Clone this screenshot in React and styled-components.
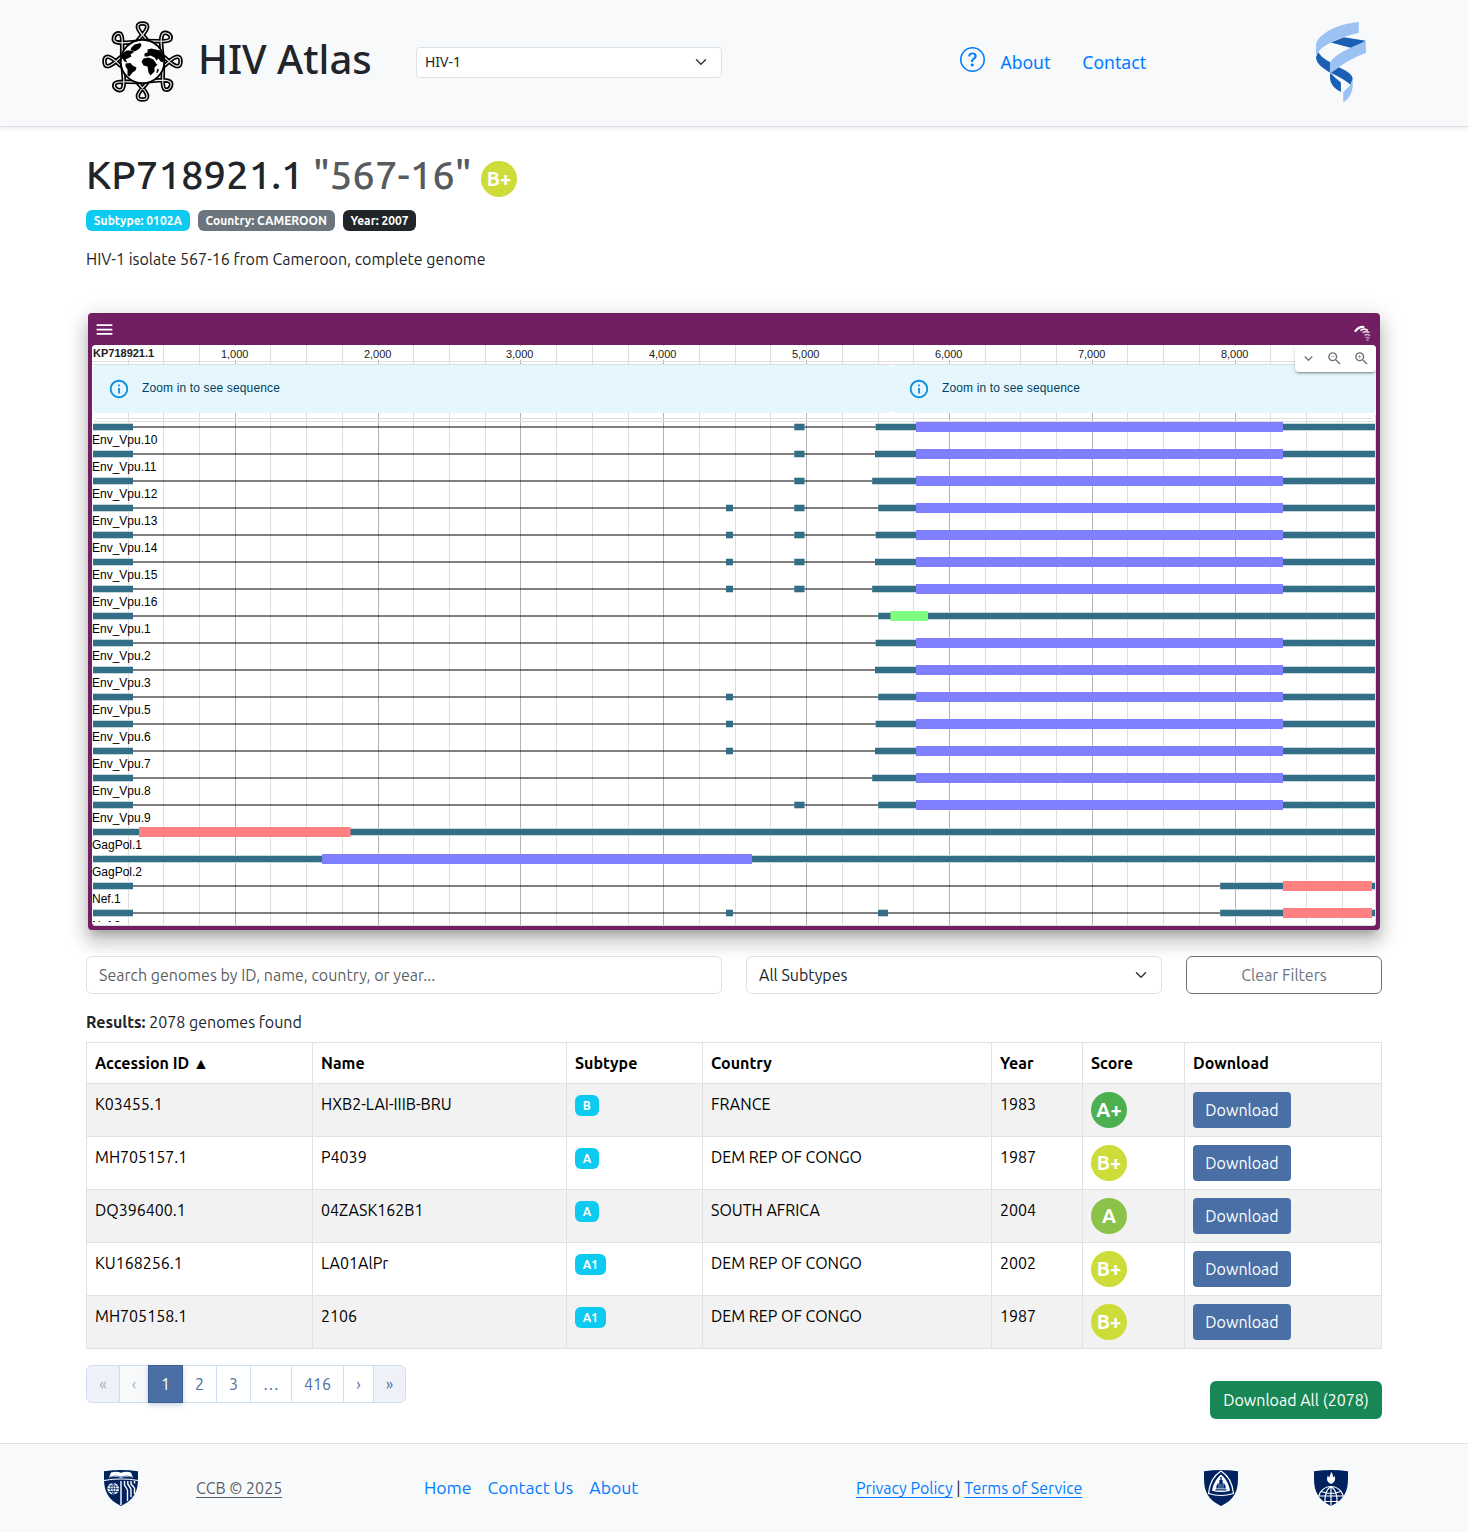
import React from 'react';
import styled, { createGlobalStyle } from 'styled-components';
import { BsQuestionCircle } from 'react-icons/bs';
import { MdMenu, MdExpandMore, MdZoomIn, MdZoomOut, MdInfoOutline } from 'react-icons/md';

const bodyFont = 'Ubuntu, "Noto Sans", sans-serif';
const headerFont = '"Noto Sans", sans-serif';
const browserFont = 'Helvetica, "Liberation Sans", Arial, sans-serif';

const GlobalStyle = createGlobalStyle`
  *, *::before, *::after { box-sizing: border-box; }
  body {
    margin: 0;
    background: #fff;
    color: #212529;
    font-family: ${bodyFont};
    font-size: 16px;
    font-weight: 400;
    line-height: 1.5;
  }
`;

const Page = styled.div`
  display: flex;
  flex-direction: column;
  width: 1468px;
  height: 1532px;
`;

/* ---------- header ---------- */

const Header = styled.header`
  display: flex;
  align-items: center;
  height: 127px;
  flex: none;
  padding: 0 102px;
  background: #f8f9fb;
  border-bottom: 1px solid #dee2e6;
  box-shadow: 0 2px 4px rgba(0, 0, 0, 0.08);
  font-family: ${headerFont};
`;

const Brand = styled.div`
  display: flex;
  align-items: center;
  width: 314px;
  padding-bottom: 3px;
`;

const BrandName = styled.span`
  margin: -5px 0 0 15px;
  font-size: 40px;
  font-weight: 500;
  line-height: 48px;
  white-space: nowrap;
`;

const SelectBox = styled.div`
  display: flex;
  align-items: center;
  justify-content: space-between;
  width: ${(p) => p.$width}px;
  height: ${(p) => (p.$small ? 31 : 38)}px;
  padding: ${(p) => (p.$small ? '0 12px 1px 8px' : '0 12px')};
  margin-bottom: ${(p) => (p.$small ? 2 : 0)}px;
  border: 1px solid #dee2e6;
  border-radius: ${(p) => (p.$small ? 4 : 6)}px;
  background: #fff;
  font-size: ${(p) => (p.$small ? 14 : 16)}px;
  line-height: ${(p) => (p.$small ? 20 : 24)}px;
  svg { display: block; }
`;

const HeaderNav = styled.nav`
  display: flex;
  align-items: center;
  margin-left: 238px;
  padding-bottom: 2px;
  color: #007bff;
  font-size: 17.6px;
`;

const HelpIcon = styled(BsQuestionCircle)`
  width: 25px;
  height: 25px;
  margin: -5px 15.4px 0 0;
`;

const NavLink = styled.a`
  margin-right: 32px;
`;

const HelixSlot = styled.div`
  display: flex;
  margin: -2px 0 0 auto;
`;

/* ---------- record summary ---------- */

const Main = styled.main`
  display: flex;
  flex-direction: column;
  width: 1296px;
  height: 1316px;
  margin: 0 auto;
  padding-top: 24px;
`;

const Title = styled.h1`
  display: flex;
  align-items: center;
  margin: 0;
  height: 48px;
  font-size: 40px;
  font-weight: 500;
  line-height: 48px;
`;

const TitleText = styled.span`
  margin-top: -1px;
`;

const Muted = styled.span`
  color: rgba(33, 37, 41, 0.75);
`;

const gradeColors = { 'A+': '#4caf50', A: '#8bc34a', 'B+': '#cddc39' };

const Grade = styled.span`
  display: flex;
  align-items: center;
  justify-content: center;
  width: 36px;
  height: 36px;
  margin: ${(p) => (p.$inTitle ? '8px 0 0 9.4px' : '0')};
  border-radius: 50%;
  background: ${(p) => gradeColors[p.$grade]};
  color: #fff;
  font-size: 20px;
  font-weight: 700;
  line-height: 1;
`;

const Badges = styled.div`
  display: flex;
  gap: 8px;
  margin-top: 11px;
`;

const badgeTones = { info: '#0dcaf0', secondary: '#6c757d', dark: '#212529' };

const Badge = styled.span`
  display: inline-block;
  height: 21px;
  padding: 5px 7.8px 4px;
  border-radius: 6px;
  background: ${(p) => badgeTones[p.$tone]};
  color: #fff;
  font-size: 12px;
  font-weight: 700;
  line-height: 12px;
`;

const Description = styled.p`
  margin: 16px 0 0;
`;

/* ---------- genome browser ---------- */

const Browser = styled.section`
  display: flex;
  flex-direction: column;
  width: 1292px;
  height: 617px;
  flex: none;
  margin: 42px 2px 0;
  padding: 0 4px 4px;
  border-radius: 4px;
  background: #721e63;
  box-shadow: 0 7px 8px -4px rgba(0, 0, 0, 0.2), 0 12px 17px 2px rgba(0, 0, 0, 0.14),
    0 5px 22px 4px rgba(0, 0, 0, 0.12);
  font-family: ${browserFont};
`;

const BrowserBar = styled.div`
  display: flex;
  justify-content: space-between;
  height: 32px;
  padding: 6px 4px 0 2px;
  color: #fff;
`;

const BrowserMark = styled.div`
  padding-top: 4px;
`;

const View = styled.div`
  position: relative;
  height: 581px;
  border-radius: 4px;
  background: #fff;
  overflow: hidden;
`;

const TrackChart = styled.svg`
  display: block;
  font-family: ${browserFont};
`;

const Notices = styled.div`
  position: absolute;
  top: 20px;
  left: 1px;
  right: 0;
  display: flex;
`;

const Notice = styled.div`
  display: flex;
  align-items: center;
  flex: ${(p) => (p.$wide ? '0 0 800px' : '1')};
  height: 48px;
  padding: 0 15px;
  gap: 12px;
  border-radius: 4px;
  background: #e5f6fd;
  color: #014361;
  font-size: 12px;
  letter-spacing: 0.14px;
  svg { width: 22px; height: 22px; color: #0f90de; }
  span { margin-top: -3px; }
`;

const ZoomControls = styled.div`
  position: absolute;
  top: 0;
  right: 0;
  display: flex;
  align-items: center;
  justify-content: space-around;
  width: 81px;
  height: 27px;
  padding-right: 1px;
  border-radius: 4px;
  background: #fff;
  color: #757575;
  box-shadow: 0 3px 1px -2px rgba(0, 0, 0, 0.2), 0 2px 2px rgba(0, 0, 0, 0.14),
    0 1px 5px rgba(0, 0, 0, 0.12);
  svg { width: 17px; height: 17px; }
`;

/* ---------- filters and table ---------- */

const Filters = styled.div`
  display: flex;
  gap: 24px;
  margin-top: 26px;
`;

const SearchInput = styled.input`
  width: 636px;
  height: 38px;
  padding: 0 12px;
  border: 1px solid #dee2e6;
  border-radius: 6px;
  background: #fff;
  color: #212529;
  font: inherit;
  &::placeholder { color: rgba(33, 37, 41, 0.75); opacity: 1; }
`;

const ClearButton = styled.button`
  width: 196px;
  height: 38px;
  border: 1px solid #6c757d;
  border-radius: 6px;
  background: transparent;
  color: #6c757d;
  font: inherit;
`;

const ResultCount = styled.div`
  margin-top: 16px;
  b { font-weight: 700; }
`;

const Table = styled.table`
  width: 1296px;
  margin-top: 8px;
  flex: none;
  table-layout: fixed;
  border-collapse: collapse;
  color: #000;
`;

const HeadCell = styled.th`
  width: ${(p) => p.$width}px;
  height: 41px;
  padding: 8px;
  border: 1px solid #dee2e6;
  font-weight: 700;
  line-height: 24px;
  text-align: left;
`;

const Row = styled.tr`
  height: 53px;
  background: ${(p) => (p.$striped ? '#f2f2f2' : '#fff')};
`;

const Cell = styled.td`
  padding: 8px;
  border: 1px solid #dee2e6;
  line-height: 24px;
  vertical-align: top;
`;

const BadgeLine = styled.div`
  display: flex;
  padding-top: 3px;
`;

const DownloadButton = styled.button`
  display: block;
  width: 98px;
  height: 36px;
  padding: 0;
  border: 0;
  border-radius: 4px;
  background: #4a6fa5;
  color: #fff;
  font: inherit;
`;

const TableFooter = styled.div`
  display: flex;
  justify-content: space-between;
  padding-top: 16px;
`;

const Pagination = styled.div`
  display: flex;
  height: 38px;
`;

const PageItem = styled.button`
  width: ${(p) => p.$width}px;
  margin-left: ${(p) => (p.$first ? 0 : -1)}px;
  padding: 0;
  border: 1px solid ${(p) => (p.$active ? '#3d5f90' : '#d0dff0')};
  border-radius: ${(p) => (p.$first ? '6px 0 0 6px' : p.$last ? '0 6px 6px 0' : '0')};
  background: ${(p) => (p.$active ? '#4a6fa5' : p.$edge ? '#eef2f8' : p.$disabled ? '#f8f9fa' : '#fff')};
  color: ${(p) => (p.$active ? '#fff' : p.$disabled ? '#a3afbf' : '#4a6fa5')};
  box-shadow: ${(p) => (p.$active ? '0 2px 5px rgba(74, 111, 165, 0.3)' : 'none')};
  z-index: ${(p) => (p.$active ? 1 : 0)};
  font: inherit;
`;

const DownloadAll = styled.button`
  width: 172px;
  height: 38px;
  margin-top: 16px;
  padding: 0;
  border: 0;
  border-radius: 6px;
  background: #198754;
  color: #fff;
  font: inherit;
`;

/* ---------- footer ---------- */

const Footer = styled.footer`
  display: grid;
  grid-template-columns: 92px 228px 432px 348px 110px auto;
  align-items: center;
  height: 89px;
  padding: 0 104px;
  border-top: 1px solid #dee2e6;
  background: #f8f9fb;
  svg { display: block; }
`;

const Copyright = styled.a`
  color: rgba(33, 37, 41, 0.75);
  text-decoration: underline;
  text-underline-offset: 3px;
`;

const FooterLinks = styled.nav`
  display: flex;
  gap: 16px;
  color: #007bff;
  font-size: 17.6px;
`;

const LegalLinks = styled.div`
  a {
    color: #007bff;
    text-decoration: underline;
    text-underline-offset: 3px;
  }
`;

/* ---------- drawings ---------- */

const Chevron = () => (
  <svg width="16" height="12" viewBox="0 0 16 16">
    <path d="m2 5 6 6 6-6" fill="none" stroke="#343a40" strokeWidth="2" strokeLinecap="round" strokeLinejoin="round" />
  </svg>
);

const topLoop = 'M-6,-19 C-3,-25 3.2,-28 4.6,-34 C5,-37.2 3,-38 0,-38 C-3,-38 -5,-37.2 -4.6,-34 C-3.2,-28 3,-25 6,-19';
const cornerLoop = 'M-2,-20 L-16,-18.8 C-24,-18.2 -28.9,-19.2 -28.700,-22.700 C-28.500,-27 -25,-29.200 -22.300,-27.800 C-19.600,-26 -20.300,-20 -20.300,-15 L-20.400,-3';

const AtlasLogo = () => (
  <svg width="81" height="81" viewBox="-40.5 -40.5 81 81">
    {[0, 90, 180, 270].map((angle) => (
      <g key={angle} transform={`rotate(${angle})`} fill="none">
        {[topLoop, cornerLoop].map((d) => (
          <g key={d}>
            <path d={d} stroke="#000" strokeWidth="4.5" />
            <path d={d} stroke="#e8e8e8" strokeWidth="1.2" />
          </g>
        ))}
      </g>
    ))}
    <circle r="21.8" fill="#fff" stroke="#000" strokeWidth="1.9" />
    <path d="M-11,-14 L-8,-17 L-2,-18.5 L-1,-16 L-3,-13 L-6,-11 L-8,-10 L-12,-12 Z" />
    <path d="M-20,-8 L-16,-11 L-9,-11 L-9,-9 L-12,-7 L-11,-5 L-15,-3 L-17,-2 L-15,1 L-18,0 L-21,-4 Z" />
    <path d="M-17,2 L-12,1.5 L-10,4 L-6,6 L-7,9 L-10,11 L-13,15 L-15,14 L-15,8 L-17,5 Z" />
    <path d="M2,-8 L5,-9 L5,-12 L9,-13 L13,-12 L18,-11 L21,-5 L21,1 L18,0 L16,-3 L14,-1 L12,-4 L8,-6 L5,-5 L2,-5 Z" />
    <path d="M1,-3 L6,-4 L11,-2 L14,2.5 L15,3 L12,6 L12,10 L8,14 L6,11 L5,5 L1,4 L-1,0 Z" />
    <path d="M15,7 L16.5,8 L15,11.5 L13.8,11 Z" />
  </svg>
);

const HelixLogo = () => (
  <svg width="50" height="81" viewBox="1117 66 148.5 240.5">
    <g fill="#1a5fb4">
      <path d="M1161,127 L1200,111 L1265,122 L1225,144 Z" />
      <path d="M1124,155 C1131,169 1146,178 1159,185 L1159,217 C1140,204 1117,191 1117,170 Z" />
      <path d="M1185,200 C1205,209 1226,220 1226,235 L1219,252 C1205,240 1180,226 1160,217 Z" />
      <path d="M1160,217 C1172,230 1180,237 1191,246 L1191,274 C1165,262 1154,240 1160,217 Z" />
    </g>
    <g fill="#9bc2f3">
      <path d="M1244,66 L1244,98 C1200,108 1140,130 1124,156 C1119,162 1117,168 1117,173 L1117,134 C1120,105 1175,72 1244,66 Z" />
      <path d="M1265,123 L1265,158 C1230,170 1195,190 1165,215 L1158,217 L1159,186 C1170,165 1215,142 1265,123 Z" />
      <path d="M1226,235 C1228,270 1222,288 1198,305 L1198,273 C1212,262 1222,252 1226,235 Z" />
    </g>
  </svg>
);

const BrowserLogo = () => (
  <svg width="18" height="18" viewBox="0 0 18 18" fill="none" stroke="#fff" strokeLinecap="round">
    <path d="M1.500,8 Q5,3.500 9.500,4" strokeWidth="2.200" />
    <path d="M7,7.200 Q10,5.200 13.200,7" strokeWidth="1.800" opacity=".9" />
    <path d="M9,9.400 Q12,7.800 15,9.400" strokeWidth="1.600" opacity=".75" />
    <path d="M11,12 Q13.500,10.800 15.500,12.400" strokeWidth="1.500" opacity=".65" />
    <path d="M12,14.400 L15,14.800 M13,17 L14,17" strokeWidth="1.500" opacity=".55" />
  </svg>
);

const shieldPath = 'M0,1.3 Q17,-1.3 34,1.3 V9 C34,21 30,30 17,36 C4,30 0,21 0,9 Z';
const navy = '#002d72';

const UniversityShield = () => (
  <svg width="34" height="36" viewBox="0 0 34 36">
    <path d={shieldPath} fill="#00235f" />
    <path d="M0,10.5 Q17,7.5 34,10.5" stroke="#fff" strokeWidth="1.1" fill="none" />
    <path d="M7,2.5 Q12,.8 17,2.8 Q22,.8 27,2.5 L29,7.6 Q22,5.8 17,8 Q12,5.8 5,7.6 Z" fill="#fff" />
    <path d="M6,7 Q12,4.8 17,7 Q22,4.8 28,7" stroke={navy} strokeWidth=".6" fill="none" />
    <circle cx="9.2" cy="18.7" r="5.8" fill="#fff" />
    <path d="M3.5,18.7 H15 M4.5,16 H14 M4.5,21.5 H14 M9.2,13 V24.5 M9.2,13 Q3.5,18.7 9.2,24.5 M9.2,13 Q15,18.7 9.2,24.5" stroke={navy} strokeWidth=".8" fill="none" />
    <path d="M17,11 V35 M20.5,11 V15 L23.500,20 M23.500,20 V31 M23.800,11 V14 L27,19 M27,19 V27 M27,11 V14 L30.500,18 M30.500,18 V24 M30.500,11 V13.500" stroke="#fff" strokeWidth="1.4" fill="none" />
  </svg>
);

const MedicineShield = () => (
  <svg width="34" height="36" viewBox="0 0 34 36">
    <path d={shieldPath} fill="#00235f" />
    <path d="M17,1 C9,6 5.5,14 4.5,23.5 Q17,27.5 29.5,23.5 C28.5,14 25,6 17,1 Z" fill="#00235f" stroke="#fff" strokeWidth="1.2" />
    <path d="M17,4.5 C11.5,9 9,15 8,20.8 Q17,23.3 26,20.8 C25,15 22.5,9 17,4.5 Z" fill="#fff" />
    <path d="M16.3,7 h1.4 v3 h1 v3.5 h1.5 q1.5,1.5 1.5,5 h-9.4 q0,-3.5 1.5,-5 h1.5 v-3.5 h1 Z M11.5,19.3 h11 v1.2 h-11 Z" fill={navy} />
    <path d="M15,14 v4.5 M17,14 v4.5 M19,14 v4.5" stroke="#fff" strokeWidth=".5" />
  </svg>
);

const PublicHealthShield = () => (
  <svg width="34" height="36" viewBox="0 0 34 36">
    <defs>
      <clipPath id="shield-clip"><path d={shieldPath} /></clipPath>
    </defs>
    <path d={shieldPath} fill="#00235f" />
    <path d="M17,2 C20,5 18.5,6.5 19,7.5 Q20,7 20.3,5.5 C22,9 21,12.5 17,14 C13,12.5 12,9 14,5.5 Q14.5,7.5 15.5,7.5 C15.5,5 17,4.5 17,2 Z" fill="#fff" />
    <g clipPath="url(#shield-clip)" fill="none" stroke="#fff" strokeWidth="1.2">
      <circle cx="17" cy="29" r="12.5" />
      <path d="M17,16 V36 M17,16.5 C11,20 10,30 12,36 M17,16.5 C23,20 24,30 22,36 M7,21.5 Q17,25 27,21.5 M4,26 H30 M6,31.5 H28" />
    </g>
  </svg>
);

/* Chart coordinates are relative to the view's left and top edges. */
const teal = '#326f86';
const blue = '#8080ff';
const red = '#ff8080';
const green = '#80ff80';
const VIEW_END = 1283;

const envRow = (name, start, small = []) => ({
  name,
  exons: [[1, 41], ...small, [start, VIEW_END]],
  cds: [824, 1191, blue],
});
const vif = [634, 641];
const vpr = [702.3, 712.5];

const tracks = [
  envRow('Env_Vpu.10', 783.7, [vpr]),
  envRow('Env_Vpu.11', 783, [vpr]),
  envRow('Env_Vpu.12', 780.2, [vpr]),
  envRow('Env_Vpu.13', 786.2, [vif, vpr]),
  envRow('Env_Vpu.14', 783.7, [vif, vpr]),
  envRow('Env_Vpu.15', 783, [vif, vpr]),
  envRow('Env_Vpu.16', 780.2, [vif, vpr]),
  { name: 'Env_Vpu.1', exons: [[1, 41], [786.2, VIEW_END]], cds: [798.5, 836, green] },
  envRow('Env_Vpu.2', 783.7),
  envRow('Env_Vpu.3', 783),
  envRow('Env_Vpu.5', 786.2, [vif]),
  envRow('Env_Vpu.6', 783.7, [vif]),
  envRow('Env_Vpu.7', 783, [vif]),
  envRow('Env_Vpu.8', 780.2),
  envRow('Env_Vpu.9', 786.2, [vpr]),
  { name: 'GagPol.1', exons: [[1, VIEW_END]], cds: [47, 258.5, red] },
  { name: 'GagPol.2', exons: [[1, VIEW_END]], cds: [230, 660, blue] },
  { name: 'Nef.1', exons: [[1, 41], [1128.2, VIEW_END]], cds: [1191, 1280, red] },
  { name: 'Nef.2', exons: [[1, 41], vif, [786, 796], [1128.2, VIEW_END]], cds: [1191, 1280, red] },
];

const gridLines = Array.from({ length: 35 }, (_, i) => ({
  x: Math.floor(0.4 + (i + 1) * 35.71) + 0.5,
  major: (i + 1) % 4 === 0,
  label: `${(i + 1) / 4},000`,
}));

const GenomeTracks = () => (
  <TrackChart width="1284" height="581">
    {gridLines.map((line) => (
      <line key={line.x} x1={line.x} x2={line.x} y1="0" y2="581" stroke={line.major ? '#b3b3b3' : '#dedede'} />
    ))}
    {gridLines.filter((line) => line.major).map((line) => (
      <g key={line.label}>
        <rect x={line.x - 15} y="1" width="30" height="14" fill="#fff" />
        <text x={line.x - 0.8} y="13" textAnchor="middle" fontSize="11" fill="#212121">{line.label}</text>
      </g>
    ))}
    <rect x="0" y="1" width="65" height="14" fill="#fff" />
    <text x="1" y="12" fontSize="11" fontWeight="700" fill="#212121">KP718921.1</text>
    <path d="M0,16.500 H1284 M0,19.500 H1284 M4,73.500 H1280 M2,76.500 H1282 M0,580.500 H1284 M1283.500,70 V581" stroke="#dedede" />
    <clipPath id="track-clip"><rect x="0" y="74" width="1284" height="503" /></clipPath>
    <g clipPath="url(#track-clip)">
      {tracks.map(({ name, exons, cds }, i) => {
        const y = 82 + i * 27;
        const [start, end, color] = cds;
        return (
          <g key={name}>
            <line x1="41" x2="1283" y1={y} y2={y} stroke="#000" />
            {exons.map(([a, b]) => (
              <g key={a}>
                <rect x={a} y={y - 4} width={b - a} height="8" fill="#c5d7dd" />
                <rect x={a} y={y - 3} width={b - a} height="6" fill={teal} />
              </g>
            ))}
            <rect x={start} y={y - 5} width={end - start} height="10" fill={color} />
            <text x="0" y={y + 17} fontSize="12" fill="#000">{name}</text>
          </g>
        );
      })}
    </g>
  </TrackChart>
);

const columns = [
  ['Accession ID ▲', 226],
  ['Name', 254],
  ['Subtype', 136],
  ['Country', 289],
  ['Year', 91],
  ['Score', 102],
  ['Download', 197],
];

const genomes = [
  ['K03455.1', 'HXB2-LAI-IIIB-BRU', 'B', 'FRANCE', '1983', 'A+'],
  ['MH705157.1', 'P4039', 'A', 'DEM REP OF CONGO', '1987', 'B+'],
  ['DQ396400.1', '04ZASK162B1', 'A', 'SOUTH AFRICA', '2004', 'A'],
  ['KU168256.1', 'LA01AlPr', 'A1', 'DEM REP OF CONGO', '2002', 'B+'],
  ['MH705158.1', '2106', 'A1', 'DEM REP OF CONGO', '1987', 'B+'],
];

export default function App() {
  return (
    <Page>
      <GlobalStyle />
      <Header>
        <Brand>
          <AtlasLogo />
          <BrandName>HIV Atlas</BrandName>
        </Brand>
        <SelectBox $width={306} $small>HIV-1<Chevron /></SelectBox>
        <HeaderNav>
          <HelpIcon />
          <NavLink>About</NavLink>
          <NavLink>Contact</NavLink>
        </HeaderNav>
        <HelixSlot><HelixLogo /></HelixSlot>
      </Header>

      <Main>
        <Title>
          <TitleText>KP718921.1 <Muted>"567-16"</Muted></TitleText>
          <Grade $grade="B+" $inTitle>B+</Grade>
        </Title>
        <Badges>
          <Badge $tone="info">Subtype: 0102A</Badge>
          <Badge $tone="secondary">Country: CAMEROON</Badge>
          <Badge $tone="dark">Year: 2007</Badge>
        </Badges>
        <Description>HIV-1 isolate 567-16 from Cameroon, complete genome</Description>

        <Browser>
          <BrowserBar>
            <MdMenu size={21} />
            <BrowserMark><BrowserLogo /></BrowserMark>
          </BrowserBar>
          <View>
            <GenomeTracks />
            <Notices>
              <Notice $wide><MdInfoOutline /><span>Zoom in to see sequence</span></Notice>
              <Notice><MdInfoOutline /><span>Zoom in to see sequence</span></Notice>
            </Notices>
            <ZoomControls>
              <MdExpandMore />
              <MdZoomOut />
              <MdZoomIn />
            </ZoomControls>
          </View>
        </Browser>

        <Filters>
          <SearchInput placeholder="Search genomes by ID, name, country, or year..." />
          <SelectBox $width={416}>All Subtypes<Chevron /></SelectBox>
          <ClearButton>Clear Filters</ClearButton>
        </Filters>
        <ResultCount><b>Results:</b> 2078 genomes found</ResultCount>

        <Table>
          <thead>
            <tr>
              {columns.map(([label, width]) => <HeadCell key={label} $width={width}>{label}</HeadCell>)}
            </tr>
          </thead>
          <tbody>
            {genomes.map(([id, name, subtype, country, year, grade], i) => (
              <Row key={id} $striped={i % 2 === 0}>
                <Cell>{id}</Cell>
                <Cell>{name}</Cell>
                <Cell><BadgeLine><Badge $tone="info">{subtype}</Badge></BadgeLine></Cell>
                <Cell>{country}</Cell>
                <Cell>{year}</Cell>
                <Cell><Grade $grade={grade}>{grade}</Grade></Cell>
                <Cell><DownloadButton>Download</DownloadButton></Cell>
              </Row>
            ))}
          </tbody>
        </Table>

        <TableFooter>
          <Pagination>
            <PageItem $width={34} $first $edge $disabled>«</PageItem>
            <PageItem $width={30} $disabled>‹</PageItem>
            <PageItem $width={35} $active>1</PageItem>
            <PageItem $width={35}>2</PageItem>
            <PageItem $width={35}>3</PageItem>
            <PageItem $width={42}>…</PageItem>
            <PageItem $width={53}>416</PageItem>
            <PageItem $width={31}>›</PageItem>
            <PageItem $width={33} $last $edge>»</PageItem>
          </Pagination>
          <DownloadAll>Download All (2078)</DownloadAll>
        </TableFooter>
      </Main>

      <Footer>
        <UniversityShield />
        <div><Copyright>CCB © 2025</Copyright></div>
        <FooterLinks><a>Home</a><a>Contact Us</a><a>About</a></FooterLinks>
        <LegalLinks><a>Privacy Policy</a> | <a>Terms of Service</a></LegalLinks>
        <MedicineShield />
        <PublicHealthShield />
      </Footer>
    </Page>
  );
}
